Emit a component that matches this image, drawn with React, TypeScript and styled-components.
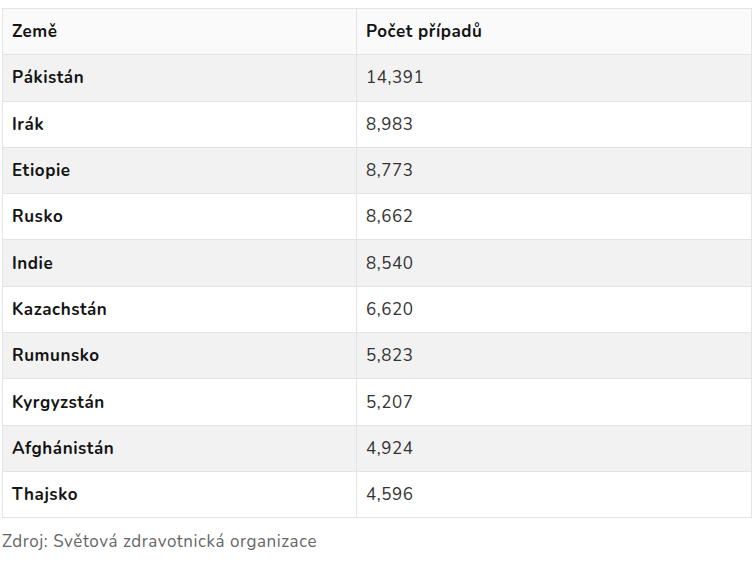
import React from "react";
import styled, { createGlobalStyle } from "styled-components";

const Global = createGlobalStyle`
  html, body { margin: 0; padding: 0; background: #fff; }
  body { font-family: "Nunito", "Lato", "Open Sans", sans-serif; color: #1a1a1a; }
`;

const Page = styled.div`
  padding: 8px 0 0 2px;
  width: 750px;
`;

const Table = styled.table`
  width: 750px;
  border-collapse: collapse;
  table-layout: fixed;
  border: 1px solid #e4e4e4;
`;

const Row = styled.tr<{ $shade: "head" | "odd" | "even" }>`
  height: 46.3px;
  background: ${(p) => (p.$shade === "even" ? "#f2f2f2" : p.$shade === "head" ? "#fafafa" : "#ffffff")};
`;

const Cell = styled.td<{ $bold?: boolean }>`
  border: 1px solid #e4e4e4;
  padding: 0 9px;
  font-size: 17px;
  letter-spacing: 0.55px;
  font-weight: ${(p) => (p.$bold ? 700 : 400)};
  color: ${(p) => (p.$bold ? "#141414" : "#333333")};
  vertical-align: middle;
  white-space: nowrap;
`;

const Caption = styled.p`
  margin: 12px 0 0 0;
  font-size: 17px;
  letter-spacing: 0.55px;
  color: #666666;
`;

const data: [string, string][] = [
  ["Pákistán", "14,391"],
  ["Irák", "8,983"],
  ["Etiopie", "8,773"],
  ["Rusko", "8,662"],
  ["Indie", "8,540"],
  ["Kazachstán", "6,620"],
  ["Rumunsko", "5,823"],
  ["Kyrgyzstán", "5,207"],
  ["Afghánistán", "4,924"],
  ["Thajsko", "4,596"],
];

export default function App() {
  return (
    <Page>
      <Global />
      <Table>
        <colgroup>
          <col style={{ width: 354 }} />
          <col />
        </colgroup>
        <tbody>
          <Row $shade="head">
            <Cell $bold>Země</Cell>
            <Cell $bold>Počet případů</Cell>
          </Row>
          {data.map(([c, n], i) => (
            <Row key={c} $shade={i % 2 === 0 ? "even" : "odd"}>
              <Cell $bold>{c}</Cell>
              <Cell>{n}</Cell>
            </Row>
          ))}
        </tbody>
      </Table>
      <Caption>Zdroj: Světová zdravotnická organizace</Caption>
    </Page>
  );
}
